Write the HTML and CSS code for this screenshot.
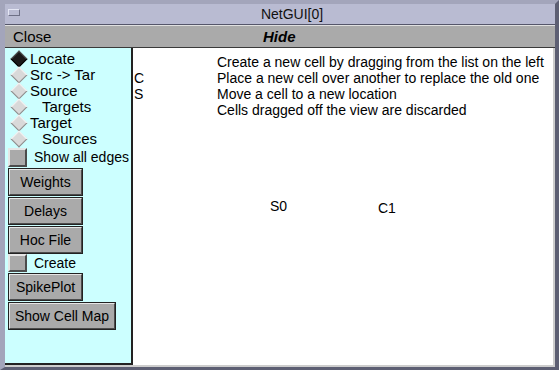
FILE: index.html
```html
<!DOCTYPE html>
<html lang="en">
<head>
  <meta charset="UTF-8" />
  <title>NetGUI[0]</title>
  <link rel="stylesheet" href="styles.css">
</head>
<body>
  <div class="frame">
    <div class="titlebar">
      <span class="min-box"></span>
      <span class="title">NetGUI[0]</span>
    </div>
    <div class="menubar">
      <span class="menu-item">Close</span>
      <span class="menu-hide">Hide</span>
    </div>
    <div class="main">
      <div class="panel">
        <div class="radio on">Locate</div>
        <div class="radio">Src -&gt; Tar</div>
        <div class="radio">Source</div>
        <div class="radio indent">Targets</div>
        <div class="radio">Target</div>
        <div class="radio indent">Sources</div>
        <div class="check">Show all edges</div>
        <button class="btn">Weights</button>
        <button class="btn">Delays</button>
        <button class="btn">Hoc File</button>
        <div class="check small">Create</div>
        <button class="btn">SpikePlot</button>
        <button class="btn wide">Show Cell Map</button>
      </div>
      <div class="canvas">
        <div class="help">
          <span></span><span>Create a new cell by dragging from the list on the left</span>
          <span>C</span><span>Place a new cell over another to replace the old one</span>
          <span>S</span><span>Move a cell to a new location</span>
          <span></span><span>Cells dragged off the view are discarded</span>
        </div>
        <span class="cell" style="left:137px;top:150px">S0</span>
        <span class="cell" style="left:245px;top:152px">C1</span>
      </div>
    </div>
  </div>
</body>
</html>
```

FILE: styles.css
```css
body {
  margin: 0;
  width: 559px;
  height: 370px;
  overflow: hidden;
  font-family: "Liberation Sans", Arial, sans-serif;
  font-size: 14px;
  color: #000;
  background: #5d5f73;
}
.frame {
  box-sizing: border-box;
  width: 559px;
  height: 370px;
  display: flex;
  flex-direction: column;
  background: #a3a5bb;
  border-left: 5px solid #a3a5bb;
  border-top: 4px solid #a3a5bb;
  border-right: 4px solid #5d5f73;
  border-bottom: 3px solid #5d5f73;
}
.titlebar {
  height: 20px;
  flex-shrink: 0;
  background: #b9bbd2;
  border-bottom: 1px solid #55566a;
  display: flex;
  align-items: center;
  position: relative;
}
.min-box {
  position: absolute;
  left: 3px;
  top: 5px;
  width: 12px;
  height: 7px;
  box-sizing: border-box;
  border-top: 1px solid #e4e6f4;
  border-left: 1px solid #e4e6f4;
  border-bottom: 1px solid #6e7086;
  border-right: 1px solid #6e7086;
}
.title {
  flex: 1;
  text-align: center;
  font-size: 14px;
  color: #111;
  padding-left: 24px;
}
.menubar {
  height: 21px;
  flex-shrink: 0;
  background: #aaaaaa;
  border-top: 1px solid #e0e0e0;
  border-bottom: 1px solid #3a3a3a;
  display: flex;
  align-items: center;
  position: relative;
}
.menu-item {
  padding-left: 8px;
  font-size: 15px;
}
.menu-hide {
  position: absolute;
  left: 258px;
  font-weight: bold;
  font-style: italic;
  font-size: 15px;
}
.main {
  flex: 1;
  min-height: 0;
  min-width: 0;
  display: flex;
  border-right: 2px solid #cdcdcd;
  border-bottom: 2px solid #cdcdcd;
}
.panel {
  width: 126px;
  flex-shrink: 0;
  background: #ccffff;
  border-right: 2px solid #222;
  border-bottom: 2px solid #222;
  padding-top: 3px;
  display: flex;
  flex-direction: column;
  align-items: flex-start;
}
.radio {
  height: 16px;
  line-height: 16px;
  padding-left: 25px;
  position: relative;
  font-size: 15px;
  white-space: nowrap;
}
.radio::before {
  content: "";
  position: absolute;
  left: 8px;
  top: 2px;
  width: 10px;
  height: 10px;
  background: #d9d9d9;
  border-top: 1px solid #f4f4f4;
  border-left: 1px solid #f4f4f4;
  border-right: 1px solid #8a8a8a;
  border-bottom: 1px solid #8a8a8a;
  transform: rotate(45deg);
}
.radio.on::before {
  background: #1a1a1a;
  border-color: #555 #000 #000 #555;
}
.radio.indent {
  padding-left: 37px;
}
.check {
  height: 19px;
  line-height: 19px;
  margin-top: 1px;
  padding-left: 29px;
  position: relative;
  font-size: 14px;
  white-space: nowrap;
}
.check.small {
  height: 18px;
  line-height: 18px;
  margin-top: 0;
}
.check::before {
  content: "";
  position: absolute;
  left: 3px;
  top: 0;
  box-sizing: border-box;
  width: 19px;
  height: 100%;
  background: #aaaaaa;
  border-top: 2px solid #e6e6e6;
  border-left: 2px solid #e6e6e6;
  border-right: 2px solid #4c4c4c;
  border-bottom: 2px solid #4c4c4c;
}
.btn {
  box-sizing: border-box;
  width: 75px;
  height: 28px;
  margin: 1px 0 0 3px;
  padding: 0 0 1px;
  background: #aaaaaa;
  border: 2px solid;
  border-color: #e6e6e6 #4c4c4c #4c4c4c #e6e6e6;
  outline: 1px solid #222;
  outline-offset: -1px;
  font-family: "Liberation Sans", Arial, sans-serif;
  font-size: 14px;
  color: #000;
}
.btn.wide {
  width: 108px;
}
.canvas {
  flex: 1;
  min-width: 0;
  overflow: hidden;
  background: #fff;
  position: relative;
}
.help {
  display: grid;
  grid-template-columns: 83px auto;
  line-height: 16px;
  padding-top: 6px;
  padding-left: 1px;
  font-size: 14px;
  white-space: nowrap;
}
.cell {
  position: absolute;
  font-size: 14px;
}
```
